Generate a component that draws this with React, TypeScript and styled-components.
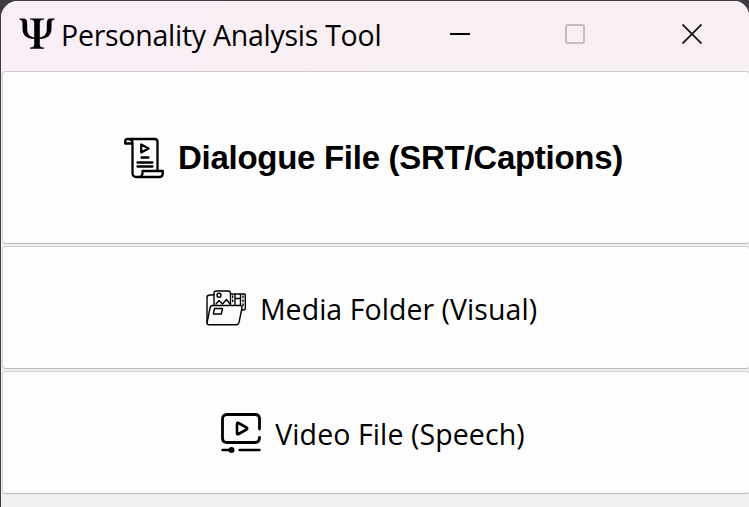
import React from "react";
import styled, { createGlobalStyle } from "styled-components";

const GlobalStyle = createGlobalStyle`
  * { box-sizing: border-box; }
  html, body { margin: 0; height: 100%; overflow: hidden; background: #26262c; }
`;

const Desktop = styled.div`
  width: 749px;
  height: 507px;
  padding: 1px 0 0 1px;
  background: #3f3b40;
  overflow: hidden;
`;

const Window = styled.main`
  height: 506px;
  display: flex;
  flex-direction: column;
  overflow: hidden;
  border-radius: 17px 15px 0 0;
  background: #f0f0f0;
`;

const TitleBar = styled.header`
  flex: 0 0 70px;
  display: flex;
  align-items: center;
  padding: 0 0 4px 18px;
  background: linear-gradient(90deg, #f9eef7 0, #f8eff3 50%, #f8eff2 100%);
`;

const Title = styled.h1`
  flex: 1;
  margin: 2px 0 0 6px;
  font: 400 28.5px/40px "Open Sans", "Noto Sans", sans-serif;
  letter-spacing: -0.26px;
  color: #000;
  white-space: nowrap;
`;

const Controls = styled.div`
  display: grid;
  grid-template-columns: 114px 116px 118px;
  margin-right: -2px;
`;

const ControlButton = styled.button`
  height: 66px;
  padding: 0;
  border: 0;
  background: none;
  display: grid;
  place-items: center;
`;

const Actions = styled.div`
  display: grid;
  grid-template-rows: 173px 123px 123px;
  row-gap: 2px;
  padding-left: 1px;
  margin-right: -1px;
`;

const ActionButton = styled.button<{ $inset?: number }>`
  display: flex;
  align-items: center;
  justify-content: center;
  gap: 14px;
  padding: 0 ${(p) => p.$inset ?? 6}px 0 0;
  border: 1px solid #d0d0d0;
  border-bottom-color: #b9b9b9;
  border-radius: 4px;
  background: #fdfdfd;
  color: #000;
  svg { flex: none; }
`;

const Label = styled.span<{ $bold?: boolean; $spacing: number }>`
  font: ${(p) =>
    p.$bold
      ? '700 33px/40px "Liberation Sans", Arial, sans-serif'
      : '400 28.5px/40px "Open Sans", "Noto Sans", sans-serif'};
  letter-spacing: ${(p) => p.$spacing}px;
  padding-top: ${(p) => (p.$bold ? 0 : 2)}px;
  white-space: nowrap;
`;

const PsiIcon = () => (
  <svg width="36" height="32" viewBox="0 0 36 32" aria-hidden="true">
    <path d="M11 0.5H25V1.6C21.8 2 20.8 2.6 20.8 5V26C20.8 28.5 21.6 29.2 25 29.6V30.8H11V29.6C14.4 29.2 15.2 28.5 15.2 26V5C15.2 2.6 14.2 2 11 1.6Z" />
    <path d="M0.5 0.5H4C8 0.5 8.2 3 8.2 7V11C8.2 16 10.5 19 16 19.4V21C7 21 3.5 17 3.5 10V6C3.5 3 3 1.9 0.5 1.7ZM35.5 .5H32C28 .5 27.8 3 27.8 7V11C27.8 16 25.5 19 20 19.4V21C29 21 32.5 17 32.5 10V6C32.5 3 33 1.9 35.5 1.7Z" />
  </svg>
);

const ScrollIcon = () => (
  <svg width="40" height="42" viewBox="0 0 40 42" fill="none" stroke="#000" strokeWidth="2.3" strokeLinejoin="round" strokeLinecap="round">
    <path d="M8 6.5H1.2V4.5C1.2 2.5 2 2 4 2H30.5C32.8 2 33.5 3 33.5 5V33.5M4 2C7 2 8.5 3 8.5 6V36C8.5 39 10 40 12.5 40H36C38.2 40 38.8 38.5 38.8 36V34H18.5V36C18.5 39 17 40 13 40" />
    <path d="M17.2 7.5V15.5L24.5 11.5Z" />
    <path d="M17.5 20.5H24.5M13.5 25.5H28.5M13.5 29.5H28.5" />
  </svg>
);

const FolderIcon = () => (
  <svg width="40" height="36" viewBox="0 0 40 36" fill="none" stroke="#000" strokeWidth="1.4" strokeLinejoin="round" strokeLinecap="round">
    <path d="M1 33V7.5C1 5.5 2 5 4 5H8V3C8 1.5 9 1 10.5 1H22.5C24 1 24.5 2 24.5 4V15" />
    <path d="M2.5 34.7H30.5C32 34.7 32.5 34 33 32.5L36 18C36.3 16 35.5 15.5 34 15.5H6.5C5 15.5 4.4 16 4 18L1 33C1 34.2 1.5 34.7 2.5 34.7Z" />
    <path d="M8 5V15M10 14L13 10.5L16.5 14L20.5 9.5L24 14" />
    <circle cx="13" cy="5.2" r="2" />
    <path d="M25 4H38.5Q39.3 4 39.3 5V18.5Q39.3 20 37.5 20H36M29 4V15M34.5 4V15M29 8.5H34.5" />
    <path d="M26.7 6V14M37 6V18" strokeDasharray="1.5 2.5" />
    <path d="M8.5 18.5H16.5L15.3 24H7.3Z" />
  </svg>
);

const VideoIcon = () => (
  <svg width="40" height="40" viewBox="0 0 40 40" fill="none" stroke="#000" strokeWidth="2.8" strokeLinejoin="round" strokeLinecap="round">
    <path d="M38.5 16V6C38.5 2.8 37 1.5 34 1.5H6C3 1.5 1.5 3 1.5 6V25C1.5 28 3 29.5 6 29.5H34C37 29.5 38.5 28 38.5 24.5" />
    <path d="M16 11V20.5Q16 22 17.5 21L25.5 16.5Q27 15.5 25.5 14.5L17.5 10Q16 9 16 11Z" strokeWidth="2.6" />
    <path d="M1.5 37H11M18.5 37H38.5" strokeWidth="2.4" />
    <circle cx="10.5" cy="37" r="3" fill="#000" stroke="none" />
  </svg>
);

export default function App() {
  return (
    <>
      <GlobalStyle />
      <Desktop>
        <Window>
          <TitleBar>
            <PsiIcon />
            <Title>Personality Analysis Tool</Title>
            <Controls>
              <ControlButton aria-label="Minimize">
                <svg width="20" height="20"><path d="M0 10H20" stroke="#000" strokeWidth="2" /></svg>
              </ControlButton>
              <ControlButton aria-label="Maximize" disabled>
                <svg width="20" height="20"><rect x="1" y="1" width="18" height="18" rx="1.5" fill="none" stroke="#c6bfc2" strokeWidth="2" /></svg>
              </ControlButton>
              <ControlButton aria-label="Close">
                <svg width="20" height="20"><path d="M.5 .5L19.5 19.5M19.5 .5L.5 19.5" stroke="#161616" strokeWidth="1.8" /></svg>
              </ControlButton>
            </Controls>
          </TitleBar>
          <Actions>
            <ActionButton $inset={5}>
              <ScrollIcon />
              <Label $bold $spacing={-0.28}>Dialogue File (SRT/Captions)</Label>
            </ActionButton>
            <ActionButton $inset={9}>
              <FolderIcon />
              <Label $spacing={0.05}>Media Folder (Visual)</Label>
            </ActionButton>
            <ActionButton>
              <VideoIcon />
              <Label $spacing={0.1}>Video File (Speech)</Label>
            </ActionButton>
          </Actions>
        </Window>
      </Desktop>
    </>
  );
}
